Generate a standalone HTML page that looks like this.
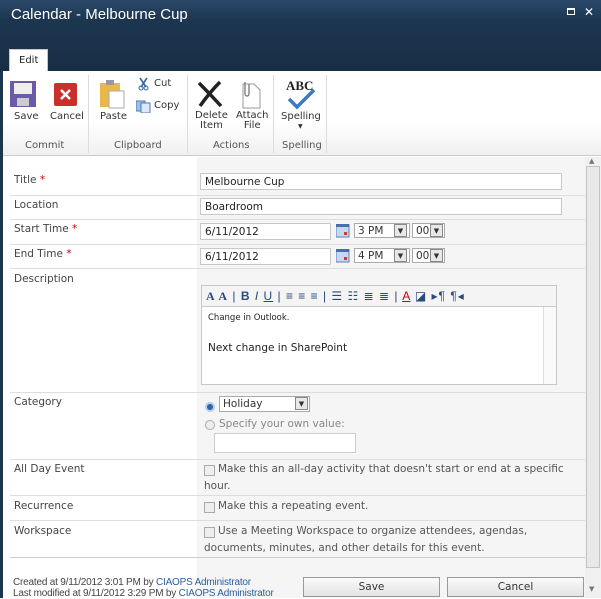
<!DOCTYPE html>
<html><head><meta charset="utf-8"><style>
*{margin:0;padding:0;box-sizing:border-box}
body{width:601px;height:598px;overflow:hidden;font-family:"DejaVu Sans","Liberation Sans",sans-serif;font-size:10.5px;color:#333;position:relative;background:#fff}
.a{position:absolute}
.hdr{left:0;top:0;width:601px;height:71px;background:linear-gradient(#2a4a6a 0,#1d3650 20px,#182e45 71px)}
.ttl{left:11px;top:6px;color:#fff;font-size:15px;font-family:"Liberation Sans",sans-serif}
.tab{left:9px;top:49px;width:39px;height:22px;background:#fff;border:1px solid #c6c6c6;border-bottom:none;font-size:10px;padding:5px 0 0 9px;color:#222}
.rib{left:3px;top:71px;width:598px;height:85px;background:linear-gradient(#fff 60%,#f0f0f0);border-bottom:1px solid #ccc}
.sep{top:75px;width:1px;height:78px;background:#dcdcdc}
.lbl{font-size:10px;color:#333;text-align:center}
.gl{top:140px;color:#555;font-size:10px}
.form{left:3px;top:157px;width:582px;height:441px;background:#fff}
.val{left:197px;top:157px;width:388px;height:441px;background:#f5f5f5}
.line{left:10px;width:575px;height:1px;background:#ddd}
.fl{left:14px;font-size:10.5px;color:#444}
.req{color:#c00}
.inp{background:#fff;border:1px solid #c8c8c8;height:17px;font-size:10.5px;padding:2px 0 0 4px;color:#222}
.dd{background:#fff;border:1px solid #aaa;height:15px;font-size:10.5px;padding:1px 0 0 3px}
.arr{width:13px;height:13px;border:1px solid #888;background:#e8e8e8;font-size:7px;text-align:center;line-height:12px}
.cb{width:11px;height:11px;border:1px solid #aaa;background:#eee}
.t{font-size:10.5px;color:#555;white-space:nowrap}
.sb{left:585px;top:157px;width:16px;height:441px;background:#f0f0f0}
</style></head><body>
<div class="a hdr"></div>
<div class="a ttl">Calendar - Melbourne Cup</div>
<div class="a" style="left:567px;top:8px;width:8px;height:7px;border:1px solid #fff;border-top-width:2px"></div>
<div class="a" style="left:584px;top:5px;color:#fff;font-size:12px;font-weight:bold">✕</div>
<div class="a" style="left:0;top:71px;width:3px;height:527px;background:#1d3650"></div>
<div class="a rib"></div>
<div class="a tab">Edit</div>
<svg class="a" style="left:10px;top:81px" width="27" height="27"><rect x="0" y="0" width="26" height="26" fill="#6a5aa8"/><rect x="4" y="2" width="18" height="11" fill="#eee"/><rect x="7" y="17" width="12" height="8" fill="#ccc"/></svg>
<svg class="a" style="left:54px;top:83px" width="24" height="24"><rect x="0" y="0" width="23" height="23" rx="2" fill="#c9302c"/><path d="M7 7L16 16M16 7L7 16" stroke="#fff" stroke-width="2.5"/></svg>
<svg class="a" style="left:99px;top:80px" width="28" height="30"><rect x="1" y="3" width="20" height="24" fill="#e9b84a"/><rect x="7" y="0" width="8" height="5" fill="#999"/><rect x="10" y="11" width="15" height="17" fill="#fff" stroke="#aaa"/></svg>
<svg class="a" style="left:137px;top:77px" width="14" height="14"><path d="M3 1L9 10M10 1L4 10" stroke="#3566a0" stroke-width="1.6"/><circle cx="4" cy="11" r="2" fill="none" stroke="#3566a0"/><circle cx="9" cy="11" r="2" fill="none" stroke="#3566a0"/></svg>
<svg class="a" style="left:136px;top:99px" width="15" height="14"><rect x="0" y="2" width="9" height="10" fill="#9ec0e8" stroke="#4a7ab5"/><rect x="5" y="4" width="9" height="10" fill="#dce9f7" stroke="#4a7ab5"/></svg>
<svg class="a" style="left:196px;top:80px" width="28" height="28"><path d="M3 3Q14 14 25 26M24 2Q14 12 4 26" stroke="#222" stroke-width="3.5" fill="none"/></svg>
<svg class="a" style="left:237px;top:80px" width="26" height="30"><path d="M6 4h11l6 6v18H6z" fill="#fff" stroke="#999"/><path d="M8 2v12a2 2 0 0 0 4 0V4" fill="none" stroke="#777" stroke-width="1.3"/></svg>
<div class="a" style="left:286px;top:78px;font-family:'Liberation Serif',serif;font-weight:bold;font-size:13px;color:#222">ABC</div>
<svg class="a" style="left:285px;top:88px" width="32" height="22"><path d="M4 11L12 19L29 2" stroke="#3a78c8" stroke-width="3.5" fill="none"/></svg>
<div class="a lbl" style="left:14px;top:111px">Save</div>
<div class="a lbl" style="left:50px;top:111px">Cancel</div>
<div class="a lbl" style="left:100px;top:111px">Paste</div>
<div class="a lbl" style="left:154px;top:78px">Cut</div>
<div class="a lbl" style="left:154px;top:100px">Copy</div>
<div class="a lbl" style="left:195px;top:111px;line-height:10px">Delete<br>Item</div>
<div class="a lbl" style="left:236px;top:111px;line-height:10px">Attach<br>File</div>
<div class="a lbl" style="left:281px;top:111px">Spelling</div>
<div class="a" style="left:298px;top:123px;font-size:6px">▼</div>
<div class="a sep" style="left:88px"></div><div class="a sep" style="left:187px"></div><div class="a sep" style="left:273px"></div><div class="a sep" style="left:326px"></div>
<div class="a gl" style="left:25px">Commit</div>
<div class="a gl" style="left:114px">Clipboard</div>
<div class="a gl" style="left:213px">Actions</div>
<div class="a gl" style="left:282px">Spelling</div>
<div class="a form"></div><div class="a val"></div>
<div class="a sb"></div>
<div class="a" style="left:586px;top:166px;width:14px;height:402px;background:#e8e8e8;border:1px solid #c4c4c4"></div>
<div class="a" style="left:589px;top:157px;font-size:7px;color:#777">▲</div>
<div class="a" style="left:589px;top:585px;font-size:7px;color:#777">▼</div>
<div class="a line" style="top:195px"></div><div class="a line" style="top:219px"></div><div class="a line" style="top:244px"></div><div class="a line" style="top:268px"></div><div class="a line" style="top:392px"></div><div class="a line" style="top:459px"></div><div class="a line" style="top:495px"></div><div class="a line" style="top:520px"></div><div class="a line" style="top:557px;background:#ccc"></div>
<div class="a fl" style="top:174px">Title <span class="req">*</span></div>
<div class="a fl" style="top:199px">Location</div>
<div class="a fl" style="top:223px">Start Time <span class="req">*</span></div>
<div class="a fl" style="top:248px">End Time <span class="req">*</span></div>
<div class="a fl" style="top:273px">Description</div>
<div class="a fl" style="top:396px">Category</div>
<div class="a fl" style="top:463px">All Day Event</div>
<div class="a fl" style="top:500px">Recurrence</div>
<div class="a fl" style="top:525px">Workspace</div>
<div class="a inp" style="left:200px;top:173px;width:362px">Melbourne Cup</div>
<div class="a inp" style="left:200px;top:198px;width:362px">Boardroom</div>
<div class="a inp" style="left:200px;top:223px;width:131px">6/11/2012</div>
<div class="a inp" style="left:200px;top:248px;width:131px">6/11/2012</div>
<svg class="a" style="left:336px;top:224px" width="14" height="14"><rect x="0" y="0" width="13" height="13" fill="#c7d9f0" stroke="#5a7fb8"/><rect x="0" y="0" width="13" height="3" fill="#4a6fa8"/><rect x="8" y="8" width="3" height="3" fill="#d33"/></svg>
<svg class="a" style="left:336px;top:249px" width="14" height="14"><rect x="0" y="0" width="13" height="13" fill="#c7d9f0" stroke="#5a7fb8"/><rect x="0" y="0" width="13" height="3" fill="#4a6fa8"/><rect x="8" y="8" width="3" height="3" fill="#d33"/></svg>
<div class="a dd" style="left:354px;top:223px;width:56px">3 PM</div><div class="a arr" style="left:394px;top:224px">▼</div>
<div class="a dd" style="left:412px;top:223px;width:33px">00</div><div class="a arr" style="left:430px;top:224px">▼</div>
<div class="a dd" style="left:354px;top:248px;width:56px">4 PM</div><div class="a arr" style="left:394px;top:249px">▼</div>
<div class="a dd" style="left:412px;top:248px;width:33px">00</div><div class="a arr" style="left:430px;top:249px">▼</div>
<div class="a" style="left:201px;top:285px;width:356px;height:22px;background:#f4f4f4;border:1px solid #c8c8c8;font-size:12px;padding:3px 0 0 4px;color:#2a4a7a;white-space:nowrap;letter-spacing:1px;font-family:'Liberation Sans',sans-serif"><b style="font-family:'Liberation Serif',serif">A A</b> | <b>B</b> <i>I</i> <u>U</u> | ≡ ≡ ≡ | ☰ ☷ ≣ ≣ | <span style="color:#c00;text-decoration:underline">A</span> ◪ ▸¶ ¶◂</div>
<div class="a" style="left:201px;top:306px;width:356px;height:79px;background:#fff;border:1px solid #c8c8c8"></div>
<div class="a" style="left:543px;top:307px;width:13px;height:77px;border-left:1px solid #ddd;background:#fafafa"></div>
<div class="a" style="left:208px;top:313px;font-size:8.5px;color:#222">Change in Outlook.</div>
<div class="a" style="left:208px;top:342px;font-size:10.5px;color:#222">Next change in SharePoint</div>
<div class="a" style="left:205px;top:402px;width:10px;height:10px;border-radius:50%;background:#2e64a8;border:2px solid #b7cde8"></div>
<div class="a dd" style="left:219px;top:396px;width:91px;height:16px">Holiday</div><div class="a arr" style="left:295px;top:397px">▼</div>
<div class="a" style="left:205px;top:420px;width:10px;height:10px;border-radius:50%;background:#eee;border:1px solid #aaa"></div>
<div class="a t" style="left:219px;top:418px;color:#888">Specify your own value:</div>
<div class="a" style="left:214px;top:433px;width:142px;height:20px;background:#fff;border:1px solid #ccc"></div>
<div class="a cb" style="left:204px;top:465px"></div>
<div class="a t" style="left:218px;top:463px">Make this an all-day activity that doesn't start or end at a specific</div>
<div class="a t" style="left:204px;top:480px">hour.</div>
<div class="a cb" style="left:204px;top:502px"></div>
<div class="a t" style="left:218px;top:500px">Make this a repeating event.</div>
<div class="a cb" style="left:204px;top:527px"></div>
<div class="a t" style="left:218px;top:525px">Use a Meeting Workspace to organize attendees, agendas,</div>
<div class="a t" style="left:204px;top:542px">documents, minutes, and other details for this event.</div>
<div class="a" style="left:13px;top:577px;font-size:10px;color:#444;line-height:11px;letter-spacing:-0.2px;font-family:'Liberation Sans',sans-serif">Created at 9/11/2012 3:01 PM by <span style="color:#2b5f9e">CIAOPS Administrator</span><br>Last modified at 9/11/2012 3:29 PM by <span style="color:#2b5f9e">CIAOPS Administrator</span></div>
<div class="a" style="left:303px;top:577px;width:137px;height:20px;border:1px solid #999;background:linear-gradient(#fafafa,#e4e4e4);text-align:center;font-size:10.5px;padding-top:3px">Save</div>
<div class="a" style="left:447px;top:577px;width:137px;height:20px;border:1px solid #999;background:linear-gradient(#fafafa,#e4e4e4);text-align:center;font-size:10.5px;padding-top:3px">Cancel</div>
</body></html>
